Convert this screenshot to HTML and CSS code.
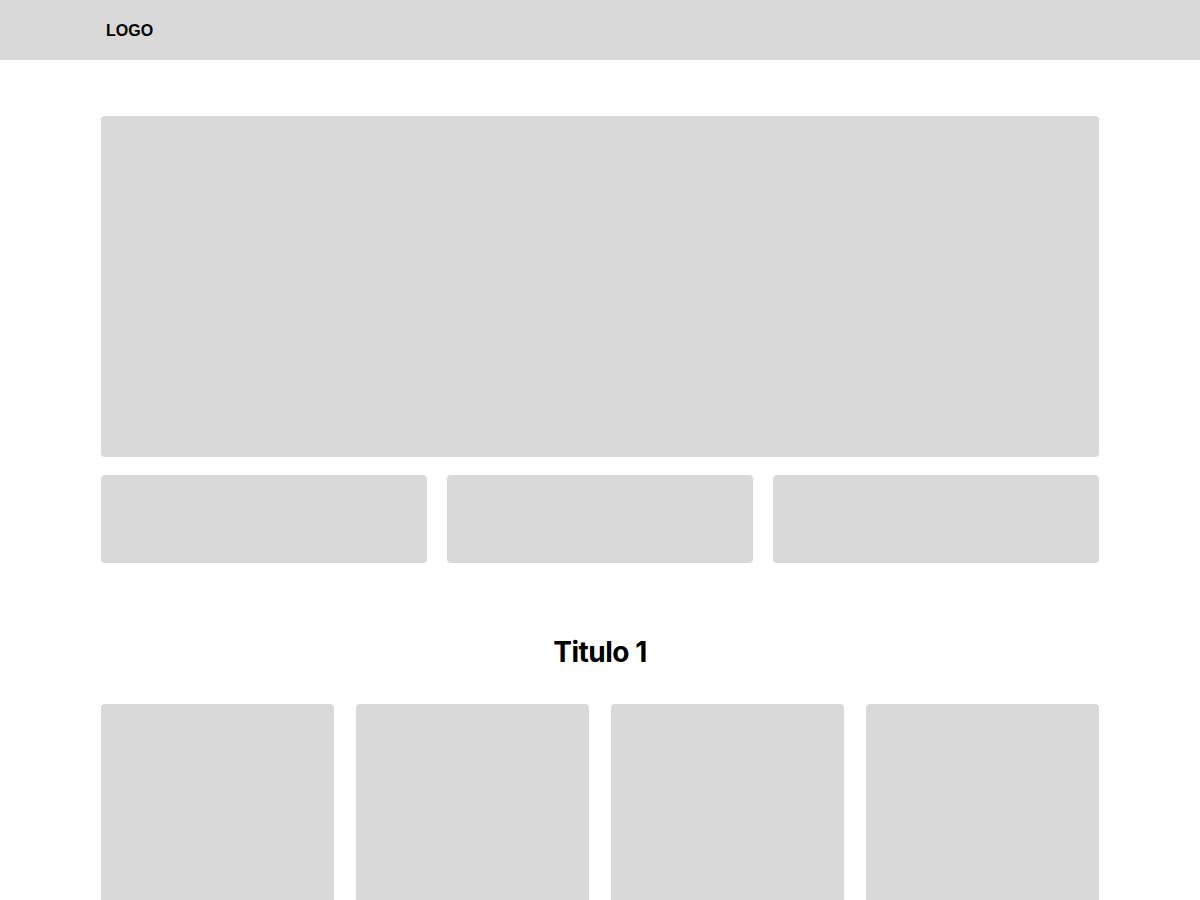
FILE: index.html
```html
<!DOCTYPE html>
<html lang="es">
<head>
<meta charset="UTF-8">
<meta name="viewport" content="width=device-width, initial-scale=1.0">
<title>Inicio</title>
<link rel="stylesheet" href="styles.css">
</head>
<body>
<header class="topbar">
  <div class="wrap">
    <span class="logo">LOGO</span>
  </div>
</header>

<main class="wrap">
  <!-- Hero + three highlights -->
  <section class="hero">
    <div class="box hero-main"></div>
    <div class="hero-row">
      <div class="box small"></div>
      <div class="box small"></div>
      <div class="box small"></div>
    </div>
  </section>

  <!-- Cards -->
  <section class="listing">
    <h2 class="title">Titulo 1</h2>
    <div class="cards">
      <div class="box card"></div>
      <div class="box card"></div>
      <div class="box card"></div>
      <div class="box card"></div>
    </div>
  </section>
</main>
</body>
</html>
```

FILE: styles.css
```css
/* Base */
body {
  margin: 0;
  font-family: Inter, "Liberation Sans", sans-serif;
  color: #000;
  background: #fff;
}

.wrap {
  width: 998px;
  margin: 0 auto;
}

/* Header */
.topbar {
  height: 60px;
  background: #d9d9d9;
}

.topbar .wrap {
  height: 60px;
  display: flex;
  align-items: center;
  padding: 2px 0 0 5px;
  box-sizing: border-box;
}

.logo {
  font-family: "Liberation Sans", Arial, sans-serif;
  font-weight: bold;
  font-size: 16px;
}

/* Placeholder boxes */
.box {
  background: #d9d9d9;
  border-radius: 4px;
}

.hero {
  padding-top: 56px;
}

.hero-main {
  height: 341px;
}

.hero-row {
  display: grid;
  grid-template-columns: 326px 1fr 326px;
  gap: 20px;
  margin-top: 18px;
}

.small {
  height: 88px;
}

/* Listing */
.listing {
  padding-top: 72px;
}

.title {
  margin: 0 0 35px;
  text-align: center;
  font-size: 28px;
  font-weight: 700;
  line-height: 34px;
  letter-spacing: -0.5px;
}

.cards {
  display: grid;
  grid-template-columns: repeat(4, 1fr);
  gap: 22px;
}

.card {
  height: 300px;
}
```
